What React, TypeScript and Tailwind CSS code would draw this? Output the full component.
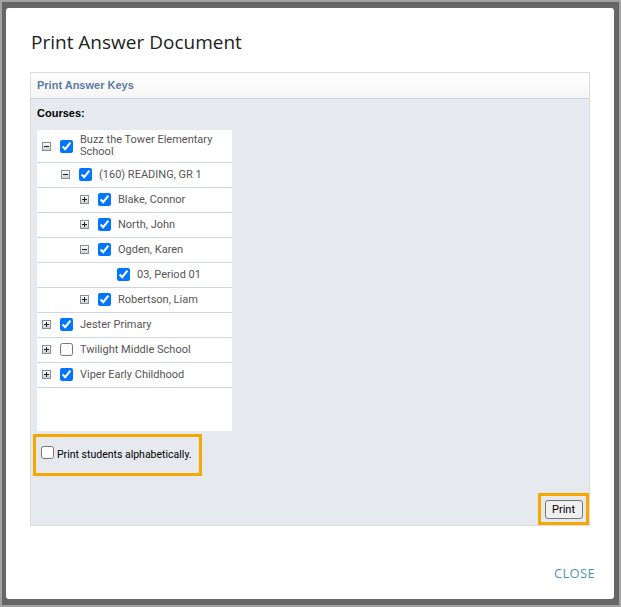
import React from "react";

type Node = {
  label: string;
  level: number;
  expander?: "plus" | "minus";
  checked: boolean;
  tall?: boolean;
};

const nodes: Node[] = [
  { label: "Buzz the Tower Elementary School", level: 0, expander: "minus", checked: true, tall: true },
  { label: "(160) READING, GR 1", level: 1, expander: "minus", checked: true },
  { label: "Blake, Connor", level: 2, expander: "plus", checked: true },
  { label: "North, John", level: 2, expander: "plus", checked: true },
  { label: "Ogden, Karen", level: 2, expander: "minus", checked: true },
  { label: "03, Period 01", level: 3, checked: true },
  { label: "Robertson, Liam", level: 2, expander: "plus", checked: true },
  { label: "Jester Primary", level: 0, expander: "plus", checked: true },
  { label: "Twilight Middle School", level: 0, expander: "plus", checked: false },
  { label: "Viper Early Childhood", level: 0, expander: "plus", checked: true },
];

const indent = ["pl-[5px]", "pl-[24px]", "pl-[43px]", "pl-[62px]"];

function Expander({ kind }: { kind?: "plus" | "minus" }) {
  if (!kind) return <span className="w-[9px] h-[9px] shrink-0" />;
  return (
    <svg width="9" height="9" viewBox="0 0 9 9" className="shrink-0">
      <defs>
        <linearGradient id="exg" x1="0" y1="0" x2="0" y2="1">
          <stop offset="0" stopColor="#ffffff" />
          <stop offset="1" stopColor="#c9ccd1" />
        </linearGradient>
      </defs>
      <rect x="0.5" y="0.5" width="8" height="8" fill="url(#exg)" stroke="#8a8d92" />
      <rect x="2" y="4" width="5" height="1" fill="#1f1f1f" />
      {kind === "plus" && <rect x="4" y="2" width="1" height="5" fill="#1f1f1f" />}
    </svg>
  );
}

function TreeRow({ node }: { node: Node }) {
  return (
    <div
      className={`flex items-center border-b border-[#cfd5e3] ${indent[node.level]} ${
        node.tall ? "h-[33px] pt-[1px]" : "h-[25px]"
      }`}
    >
      <Expander kind={node.expander} />
      <input
        type="checkbox"
        defaultChecked={node.checked}
        className="m-0 ml-[9px] w-[13px] h-[13px] shrink-0"
      />
      <span className="ml-[7px] pr-[6px] text-[11px] leading-[12px] text-[#555]">{node.label}</span>
    </div>
  );
}

export default function App() {
  return (
    <div className="w-[621px] h-[607px] border-2 border-[#a2a2a2] bg-[#666666] pt-[6px] pl-[4px] font-['Roboto',sans-serif]">
      <div className="w-[608px] h-[591px] bg-white rounded-[3px] flex flex-col px-[24px]">
        <h1 className="mt-[19px] ml-[1px] text-[19px] leading-[30px] text-[#222] font-['Open_Sans',sans-serif]">
          Print Answer Document
        </h1>

        <div className="mt-[15px] h-[454px] border border-[#dcdcdc] bg-[#e6eaee] flex flex-col">
          <div className="h-[26px] bg-gradient-to-b from-white to-[#f6f6f6] border-b border-[#c8d2e4] flex items-center px-[6px]">
            <span className="text-[11px] font-bold text-[#5a7aa6] font-['Liberation_Sans',sans-serif]">
              Print Answer Keys
            </span>
          </div>

          <div className="px-[6px] pt-[6px] text-[11px] font-bold text-black font-['Liberation_Sans',sans-serif]">
            Courses:
          </div>

          <div className="ml-[6px] mt-[8px] w-[195px] h-[301px] bg-white">
            {nodes.map((n) => (
              <TreeRow key={n.label} node={n} />
            ))}
          </div>

          <div className="ml-[2px] mt-[3px] w-[169px] h-[42px] border-[3px] border-[#f5a900] flex items-center pl-[5px]">
            <input type="checkbox" className="m-0 w-[13px] h-[13px] -mt-[4px]" />
            <span className="ml-[3px] text-[10.5px] text-black">Print students alphabetically.</span>
          </div>

          <div className="mt-auto flex justify-end">
            <div className="w-[51px] h-[32px] border-[3px] border-[#f5a900] flex items-center justify-center">
              <button className="w-[38px] h-[19px] rounded-[3px] border border-[#767676] bg-[#efefef] text-[11px] text-black leading-none">
                Print
              </button>
            </div>
          </div>
        </div>

        <div className="mt-auto mb-[16px] flex justify-end">
          <button className="text-[13px] tracking-[0.3px] text-[#4e97a8] mr-[-5px] font-['Open_Sans',sans-serif]">
            CLOSE
          </button>
        </div>
      </div>
    </div>
  );
}
